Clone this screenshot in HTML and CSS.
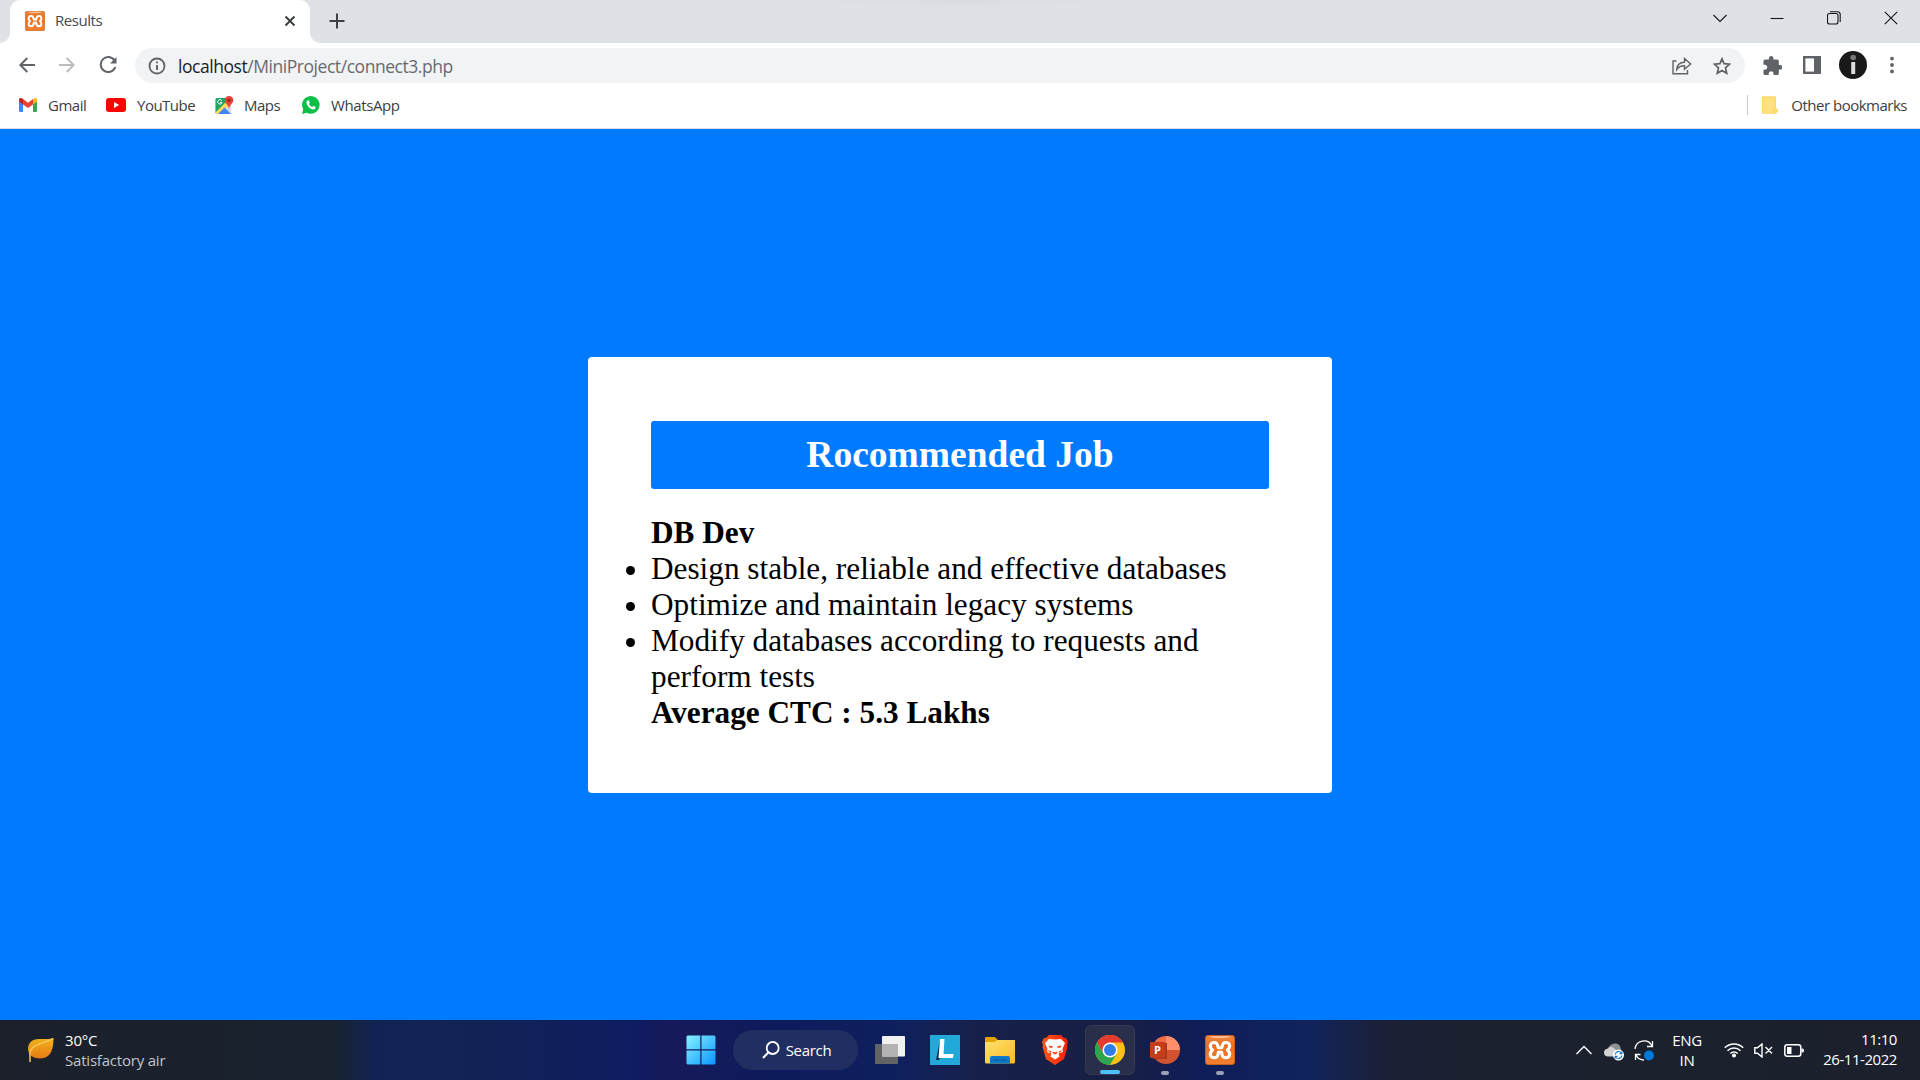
FILE: index.html
```html
<!DOCTYPE html>
<html lang="en">
<head>
<meta charset="utf-8">
<title>Results</title>
<link rel="stylesheet" href="styles.css">
</head>
<body>
<svg class="defs" width="0" height="0">
  <defs>
    <linearGradient id="orange" x1="0" y1="0" x2="0" y2="1"><stop offset="0" stop-color="#ef8a45"/><stop offset=".3" stop-color="#ea6f20"/><stop offset="1" stop-color="#f08030"/></linearGradient>
    <symbol id="xampp" viewBox="0 0 30 30">
      <rect x=".5" y=".5" width="29" height="29" rx="2.5" fill="url(#orange)" stroke="#c95e1a"/>
      <path d="M4 1.200H26Q24 3 15 3T4 1.200Z" fill="#f7c6a0"/>
      <path d="M9.700 7.500C5 7.200 3.800 12 7.600 15C3.800 18 5 23 9.700 22.700C12.700 22.500 13 20.500 13.300 17.300H16.700C17 20.500 17.300 22.500 20.300 22.700C25 23 26.200 18 22.400 15C26.200 12 25 7.200 20.300 7.500C17.300 7.700 17.800 10 16.700 12.800H13.300C12.200 10 12.700 7.700 9.700 7.500Z" fill="none" stroke="#fff" stroke-width="3.100" stroke-linejoin="round"/>
    </symbol>
  </defs>
</svg>
<div class="screen">
  <header class="tabstrip">
    <div class="tab">
      <svg class="favicon" width="20" height="20"><use href="#xampp"/></svg>
      <span class="tab-title">Results</span>
      <svg class="tab-close" width="12" height="12" viewBox="0 0 12 12"><path d="M1.500 1.500L10.500 10.500M10.500 1.500L1.500 10.500" stroke="#3c4043" stroke-width="2"/></svg>
    </div>
    <svg class="new-tab" width="16" height="16" viewBox="0 0 16 16"><path d="M8 .5V15.500M.5 8H15.500" stroke="#3c4043" stroke-width="2"/></svg>
    <div class="window-controls">
      <svg width="14" height="14" viewBox="0 0 14 14"><path d="M.5 4L7 10.500L13.500 4"/></svg>
      <svg width="14" height="14" viewBox="0 0 14 14"><path d="M.5 7.500H13.500"/></svg>
      <svg width="14" height="14" viewBox="0 0 14 14"><rect x=".5" y="2.500" width="10.500" height="10.500" rx="2"/><path d="M3 .7H10.500Q13.200 .7 13.200 3.500V11"/></svg>
      <svg width="14" height="14" viewBox="0 0 14 14"><path d="M.8 .8L13.200 13.200M13.200 .8L.8 13.200"/></svg>
    </div>
  </header>
  <div class="toolbar">
    <svg class="nav" width="16" height="16" viewBox="0 0 16 16"><path d="M16 8H1.500M8.300 1L1.300 8L8.300 15" stroke="#5f6368"/></svg>
    <svg class="nav" width="16" height="16" viewBox="0 0 16 16"><path d="M0 8H14.500M7.700 1L14.700 8L7.700 15" stroke="#babcbe"/></svg>
    <svg class="nav" width="18" height="18" viewBox="0 0 18 18"><path d="M15.500 4.500A7.500 7.500 0 1 0 16.300 11" stroke="#5f6368"/><path d="M17.500 1V7.500H11Z" fill="#5f6368"/></svg>
    <div class="omnibox">
      <svg width="18" height="18" viewBox="0 0 18 18"><circle cx="9" cy="9" r="7.500" fill="none" stroke="#5f6368" stroke-width="1.800"/><path d="M9 8V13M9 4.500V6.300" stroke="#5f6368" stroke-width="1.900"/></svg>
      <div class="url"><span class="host">localhost</span>/MiniProject/connect3.php</div>
      <svg class="share" width="20" height="18" viewBox="0 0 20 18"><path d="M4.500 4H1V16.800H15.500V13" /><path d="M4.700 12.500C5 7.500 8 5.500 12.500 5.300V1.500L18.700 7L12.500 12.300V8.800C9 8.800 6.500 9.800 4.700 12.500Z"/></svg>
      <svg class="star" width="18" height="18" viewBox="0 0 18 18"><path d="M9 1.800L11.100 6.700L16.600 7.200L12.500 10.800L13.700 16.200L9 13.400L4.300 16.200L5.500 10.800L1.400 7.200L6.900 6.700Z" fill="none" stroke="#5f6368" stroke-width="1.700"/></svg>
    </div>
    <svg class="puzzle" width="19" height="19" viewBox="1.500 1 21 21"><path fill="#5f6368" d="M20.500 11H19V7c0-1.100-.9-2-2-2h-4V3.500C13 2.120 11.880 1 10.500 1S8 2.120 8 3.500V5H4c-1.100 0-1.990.9-1.990 2v3.800H3.500c1.490 0 2.700 1.210 2.700 2.700s-1.210 2.700-2.700 2.700H2V20c0 1.100.9 2 2 2h3.800v-1.500c0-1.490 1.210-2.700 2.700-2.700 1.490 0 2.700 1.210 2.700 2.700V22H17c1.100 0 2-.9 2-2v-4h1.500c1.380 0 2.500-1.120 2.500-2.500S21.880 11 20.500 11z"/></svg>
    <svg class="panel" width="18" height="18" viewBox="0 0 18 18"><rect x="1.200" y="1.200" width="15.600" height="15.600" fill="none" stroke="#5f6368" stroke-width="2.400"/><rect x="11" y="1" width="6" height="16" fill="#5f6368"/></svg>
    <svg class="avatar" width="28" height="28" viewBox="0 0 28 28"><circle cx="14" cy="14" r="14" fill="#191919"/><circle cx="14.200" cy="6.500" r="2.800" fill="#777"/><rect x="12.200" y="11" width="4" height="12" fill="#ddd"/></svg>
    <svg class="kebab" width="4" height="18" viewBox="0 0 4 18" fill="#5f6368"><circle cx="2" cy="2.600" r="1.900"/><circle cx="2" cy="9" r="1.900"/><circle cx="2" cy="15.400" r="1.900"/></svg>
  </div>
  <nav class="bookmarks">
    <div class="bookmark gmail"><svg width="18" height="14" viewBox="0 0 18 14"><path d="M0 2V12.800Q0 14 1.200 14H4V5Z" fill="#4285f4"/><path d="M14 5V14H16.800Q18 14 18 12.800V2Z" fill="#34a853"/><path d="M4 1V6.500L9 10L14 6.500V1L9 4.800Z" fill="#ea4335"/><path d="M0 1.800C0 0 2 -.5 4 1V6.500L0 3.500Z" fill="#c5221f"/><path d="M18 1.800C18 0 16 -.5 14 1V6.500L18 3.500Z" fill="#fbbc04"/></svg><span>Gmail</span></div>
    <div class="bookmark youtube"><svg width="20" height="14" viewBox="0 0 20 14"><rect width="20" height="14" rx="3" fill="#f00"/><path d="M8 4V10L13.200 7Z" fill="#fff"/></svg><span>YouTube</span></div>
    <div class="bookmark maps"><svg width="19" height="19" viewBox="0 0 19 19"><rect x=".5" y="2" width="15.500" height="16" rx="1.500" fill="#dadce0"/><path d="M.5 17V3.500Q.5 2 2 2H13L13.500 4L1 17.500Z" fill="#1fa463"/><path d="M.5 16.500L12 5L14.500 9L4.500 18H2Z" fill="#fddb5b"/><path d="M3 18L9.500 11.500L16 18Z" fill="#4285f4"/><path d="M14 0C11.500 0 9.700 1.800 9.700 4.200C9.700 7.500 13.300 8 14 13C14.700 8 18.300 7.500 18.300 4.200C18.300 1.800 16.500 0 14 0Z" fill="#ea4335"/><circle cx="14" cy="4.200" r="1.700" fill="#8c2b22"/><path d="M6.700 4.600A2.200 2.200 0 1 0 7 6.500H5" fill="none" stroke="#fff"/></svg><span>Maps</span></div>
    <div class="bookmark whatsapp"><svg width="18" height="18" viewBox="0 0 18 18"><path d="M0 18L1.200 13.300A8.800 8.800 0 1 1 4.800 16.700Z" fill="#0abf48"/><path d="M6 4.300C4.500 4.700 4 6.500 5 8.500C6.500 11.300 8.500 13.200 11 13.500C12.700 13.600 13.900 12.300 13.700 11L11.300 9.800L10.200 11.100C8.800 10.500 7.600 9.300 7 8L7.800 6.900L6.900 4.400Z" fill="#fff"/></svg><span>WhatsApp</span></div>
    <div class="bookmark other"><svg width="16" height="19" viewBox="0 0 16 19"><path d="M0 1.500Q0 .5 1 .5H13Q14 .5 14 1.500V12.500Q15.500 13 15.500 14V16Q15.500 18 13 18H1Q0 18 0 17Z" fill="#ffe082"/><path d="M12 18V13.500Q12 12.500 13.500 12.500Q15 12.800 15 14V16" fill="none" stroke="#fbce3d"/><path d="M.5 17V1H13.500V12" fill="none" stroke="#fdd861"/></svg><span>Other bookmarks</span></div>
  </nav>
  <main class="page">
    <section class="card">
      <h1>Rocommended Job</h1>
      <div class="result">
        <strong>DB Dev</strong>
        <ul>
          <li>Design stable, reliable and effective databases</li>
          <li>Optimize and maintain legacy systems</li>
          <li>Modify databases according to requests and perform tests</li>
        </ul>
        <strong>Average CTC : 5.3 Lakhs</strong>
      </div>
    </section>
  </main>
  <footer class="taskbar">
    <div class="weather">
      <svg width="26" height="25" viewBox="0 0 26 25"><defs><linearGradient id="leaf" x1="0" y1="0" x2="0" y2="1"><stop stop-color="#f0b41a"/><stop offset="1" stop-color="#e67a16"/></linearGradient></defs><path d="M25.500 0C25.500 9 24 20.500 12 20.500C4 20.500 0 16 0 11C0 5 4 1 11 1C17 1 20 1.500 25.500 0Z" fill="url(#leaf)"/><path d="M25 .7C17 5 3 6 2 15V24" fill="none" stroke="#f7c65a" stroke-width="1.500"/></svg>
      <div class="weather-text"><span>30°C</span><span class="air">Satisfactory air</span></div>
    </div>
    <div class="apps">
      <div class="app"><svg width="30" height="30" viewBox="0 0 30 30"><defs><linearGradient id="win" gradientUnits="userSpaceOnUse" x1="0" y1="0" x2="30" y2="30"><stop stop-color="#8af3ff"/><stop offset="1" stop-color="#0794ff"/></linearGradient></defs><path d="M1.500 .5H14.300V14.300H.5V1.500ZM15.500 .5H28.500L29.500 1.500V14.300H15.500ZM.5 15.500H14.300V29.500H1.500L.5 28.500ZM15.500 15.500H29.500V28.500L28.500 29.500H15.500Z" fill="url(#win)"/></svg></div>
      <div class="search"><svg width="18" height="18" viewBox="0 0 18 18"><circle cx="10.700" cy="7" r="6" fill="none" stroke="#fff" stroke-width="1.800"/><path d="M6.300 11.500L1 17" stroke="#fff" stroke-width="2"/></svg><span>Search</span></div>
      <div class="app"><svg width="30" height="28" viewBox="0 0 30 28"><rect y="8" width="23" height="20" rx="1" fill="#626366"/><rect x="7" width="23" height="20.500" rx="1" fill="#f1f1f1"/><rect x="7" y="8" width="16" height="12.500" fill="#b3b3b3"/></svg></div>
      <div class="app"><svg width="30" height="30" viewBox="0 0 30 30"><rect width="30" height="30" fill="#22a9da"/><path d="M10 5L6 25H9L11 22Z" fill="#0c2f5c"/><path d="M10 4H14.500L13.500 19H23.500L23 23H8.500Z" fill="#fff"/></svg></div>
      <div class="app"><svg width="30" height="28" viewBox="0 0 30 28"><defs><linearGradient id="folder" x1="0" y1="0" x2="1" y2="1"><stop stop-color="#ffe173"/><stop offset="1" stop-color="#f9bc1d"/></linearGradient></defs><path d="M0 2Q0 1 1 1H10L13 4H29Q30 4 30 5V12H0Z" fill="#e0a300"/><path d="M0 6H9L12.500 4H29Q30 4 30 5V26Q30 27.500 28.500 27.500H1.500Q0 27.500 0 26Z" fill="url(#folder)"/><path d="M5 27.500V22Q5 20 7 20H23Q25 20 25 22V27.500Z" fill="#0f78c8"/><path d="M8 24H22" stroke="#07569b"/></svg></div>
      <div class="app"><svg width="26" height="30" viewBox="0 0 26 30"><defs><linearGradient id="brave"><stop stop-color="#ff5a18"/><stop offset="1" stop-color="#f51d08"/></linearGradient></defs><path d="M7 0H19L22 3H24L26 7L25 10L25.500 12L22 24L13 30L4 24L.5 12L1 10L0 7L2 3H4Z" fill="url(#brave)"/><path d="M13 4.500L19 4L23 8L20.500 14L21 17L16.500 18.500L17.500 21.500L13 24.500L8.500 21.500L9.500 18.500L5 17L5.500 14L3 8L7 4Z" fill="#fff"/><path d="M6.500 10.500L11 11.500L10 13L7.500 12.500ZM19.500 10.500L15 11.500L16 13L18.500 12.500ZM11 16.500L13 17.500L15 16.500L15.500 18L13 19.500L10.500 18ZM5.500 15L9.500 16.500L8.500 18ZM20.500 15L16.500 16.500L17.500 18Z" fill="#f63e12"/></svg></div>
      <div class="app active"><svg width="30" height="30" viewBox="0 0 30 30"><circle cx="15" cy="15" r="15" fill="#fbc116"/><path d="M2 7.500A15 15 0 0 1 28 7.500H15L8.500 19Z" fill="#e33b2e"/><path d="M2 7.500A15 15 0 0 0 15 30L21.500 18.700L15 15L8.500 18.700Z" fill="#2da44e"/><circle cx="15" cy="15" r="7.500" fill="#fff"/><circle cx="15" cy="15" r="6" fill="#2f7de9"/></svg><i class="mark"></i></div>
      <div class="app running"><svg width="30" height="28" viewBox="0 0 30 28"><path d="M16 0A14 14 0 0 0 2 14H16Z" fill="#ed6c47"/><path d="M16 0A14 14 0 0 1 30 14H16Z" fill="#ff8f6b"/><path d="M2 14A14 14 0 0 0 30 14Z" fill="#d35230"/><rect x="3" y="7" width="14" height="16" fill="#a83720"/><rect y="6" width="15" height="16" rx="1" fill="#c43e1c"/></svg><b class="letter">P</b><i class="mark"></i></div>
      <div class="app running"><svg width="30" height="30"><use href="#xampp"/></svg><i class="mark"></i></div>
    </div>
    <div class="tray">
      <svg width="16" height="10" viewBox="0 0 16 10"><path d="M.5 9L8 1.500L15.500 9" fill="none" stroke="#fff" stroke-width="1.400"/></svg>
      <svg class="cloud" width="20" height="18" viewBox="0 0 20 18"><path d="M4 5Q7 0 12 .5Q16 1 16.500 5Q18 7 17 10L6 8Z" fill="#8e9093"/><path d="M3.500 13.500Q0 13 0 9.500Q0 6 4 5.500Q8 2 12 7L14 13.500Z" fill="#d2d2d2"/><circle cx="14.500" cy="12" r="5.500" fill="#fff"/><path d="M11.200 11.500A3.500 3.500 0 0 1 17.500 10M17.800 12.500A3.500 3.500 0 0 1 11.500 14M17.800 8.500V10.700H15.500M11.200 15.600V13.300H13.500" fill="none" stroke="#1777c9" stroke-width="1.200"/></svg>
      <svg class="sync" width="20" height="21" viewBox="0 0 20 21"><path d="M1 9A9 9 0 0 1 18 6M18.500 1V6.500H13M10 20A9 9 0 0 1 2 15M1.500 20V14.500H6.500" fill="none" stroke="#fff" stroke-width="1.300"/><circle cx="15" cy="15.500" r="5" fill="#0078d7"/></svg>
      <div class="language"><span>ENG</span><span>IN</span></div>
      <svg class="wifi" width="20" height="16" viewBox="0 0 20 16" fill="none" stroke="#fff" stroke-width="1.500"><path d="M.8 5.800A13 13 0 0 1 19.200 5.800M3.500 8.700A9.200 9.200 0 0 1 16.500 8.700M6.300 11.500A5.300 5.300 0 0 1 13.700 11.500"/><circle cx="10" cy="13.500" r="1.300" fill="#fff"/></svg>
      <svg class="sound" width="19" height="15" viewBox="0 0 19 15" fill="none" stroke="#fff" stroke-width="1.400"><path d="M.8 4.800H3.500L8 1V14L3.500 10.200H.8ZM11.500 4L18 10.500M18 4L11.500 10.500"/></svg>
      <svg class="battery" width="20" height="13" viewBox="0 0 20 13"><rect x=".8" y=".8" width="16" height="11.400" rx="2.500" fill="none" stroke="#fff" stroke-width="1.500"/><rect x="3" y="3" width="4.500" height="7" fill="#fff"/><path d="M17.500 4.500H18.500Q20 4.500 20 6.500T18.500 8.500H17.500Z" fill="#fff"/></svg>
      <div class="clock"><span class="time">11:10</span><span class="date">26-11-2022</span></div>
    </div>
  </footer>
</div>
</body>
</html>
```
FILE: styles.css
```css
* { box-sizing: border-box; }
body { margin: 0; font-family: "Open Sans", "Noto Sans", sans-serif; overflow: hidden; }
svg { display: block; flex: none; }
.defs { position: absolute; }
.screen { width: 1920px; height: 1080px; display: grid; grid-template-rows: 43px 46px 40px 891px 60px; background: #fff; }
span, .url { white-space: nowrap; }

/* Tab strip */
.tabstrip { display: flex; background: radial-gradient(ellipse 150px 9px at 960px 0, #d8dbdf, #dee1e6); }
.tab { position: relative; width: 300px; height: 43px; margin-left: 10px; padding: 0 14px 2px 15px; display: flex; align-items: center; background: #fff; border-radius: 10px 10px 0 0; }
.tab::before, .tab::after { content: ""; position: absolute; bottom: 0; width: 10px; height: 10px; }
.tab::before { left: -10px; background: radial-gradient(circle at 0 0, transparent 9.500px, #fff 10px); }
.tab::after { right: -10px; background: radial-gradient(circle at 100% 0, transparent 9.500px, #fff 10px); }
.tab-title { margin: -2px 0 0 10px; font-size: 15px; letter-spacing: -.45px; color: #45494d; }
.tab-close { margin: 1px 0 0 auto; }
.new-tab { margin: 13px 0 0 19px; }
.window-controls { margin-left: auto; padding: 11px 22px 0 0; display: flex; gap: 43px; fill: none; stroke: #151515; stroke-width: 1.100; }

/* Address row */
.toolbar { display: flex; align-items: center; padding: 0 21px 2px 19px; }
.nav { fill: none; stroke-width: 2; margin-right: 24px; }
.nav + .nav + .nav { margin-right: 18px; }
.omnibox { width: 1610px; height: 35px; margin-top: 1px; border-radius: 18px; background: #f1f3f4; display: flex; align-items: center; padding: 0 14px 0 13px; }
.url { margin-left: 12px; color: #676b70; font-size: 17.500px; letter-spacing: -.45px; }
.host { color: #202124; }
.share { margin-left: auto; fill: none; stroke: #5f6368; stroke-width: 1.400; }
.star { margin-left: 21px; }
.puzzle { margin-left: 18px; }
.panel { margin-left: 21px; }
.avatar { margin-left: 18px; }
.kebab { margin-left: auto; margin-right: 5px; }

/* Bookmarks */
.bookmarks { display: flex; align-items: center; padding: 0 13px 7px 19px; border-bottom: 1px solid #dadce0; }
.bookmark { display: flex; align-items: center; font-size: 15px; letter-spacing: -.5px; color: #3c4043; }
.bookmark span { margin-top: -1px; }
.gmail { width: 87px; gap: 11px; }
.youtube { width: 109px; gap: 11px; }
.maps { width: 87px; gap: 10px; }
.whatsapp { gap: 11px; letter-spacing: -.4px; }
.other { margin-left: auto; height: 20px; border-left: 1px solid #c9cbd0; padding-left: 14px; gap: 13px; }

/* Page */
.page { background: #007bff; display: flex; justify-content: center; align-items: flex-start; padding-top: 228px; }
.card { width: 744px; height: 436px; padding: 64px 63px; background: #fff; border-radius: 4px; font-family: "Liberation Serif", serif; color: #000; }
.card h1 { margin: 0 0 26px; height: 68px; background: #007bff; border-radius: 3px; color: #fff; text-align: center; font-size: 37.500px; line-height: 67px; }
.result { font-size: 31.250px; line-height: 36px; }
.result strong { display: block; }
.result ul { margin: 0; padding: 0; }

/* Taskbar */
.taskbar { display: grid; grid-template-columns: 686px 1fr 344px; color: #fff; font-size: 15px; letter-spacing: -.3px; background: linear-gradient(90deg, #1b202b 0, #19222f 335px, #112353 375px, #122255 480px, #0f1c62 640px, #171a5a 665px, #0d1b5c 780px, #0f205e 900px, #15204b 970px, #191f43 1120px, #0e1d58 1200px, #10235c 1310px, #1b2036 1385px, #1b212e 1480px, #1b202c 100%); }
.weather { display: flex; padding: 18px 0 0 28px; }
.weather-text { display: flex; flex-direction: column; margin: -8px 0 0 11px; line-height: 20px; letter-spacing: -.2px; }
.air { color: #c3c5ca; }
.apps { display: flex; align-items: center; gap: 5px; margin-left: -10px; }
.app { width: 50px; height: 50px; position: relative; display: flex; align-items: center; justify-content: center; flex: none; }
.search { width: 125px; height: 40px; margin: 0 2px; padding-left: 2px; border-radius: 20px; background: #202e61; display: flex; align-items: center; justify-content: center; gap: 6px; flex: none; }
.active { background: #292e4b; border: 1px solid #343956; border-radius: 6px; }
.mark { position: absolute; bottom: 0; width: 8px; height: 4px; border-radius: 2px; background: #9ba0b5; }
.active .mark { width: 20px; background: #4cc2ff; }
.letter { position: absolute; left: 14px; top: 17px; font-size: 11px; line-height: 16px; }
.tray { display: flex; align-items: center; padding-right: 23px; }
.cloud { margin: 3px 0 0 12px; }
.sync { margin-left: 10px; }
.language { margin: -1px 0 0 16px; width: 34px; display: flex; flex-direction: column; align-items: center; line-height: 20px; }
.wifi { margin-left: 20px; }
.sound { margin-left: 10px; }
.battery { margin-left: 11px; }
.clock { margin: -3px 0 0 auto; display: flex; flex-direction: column; align-items: flex-end; line-height: 20px; letter-spacing: -.45px; }
```
